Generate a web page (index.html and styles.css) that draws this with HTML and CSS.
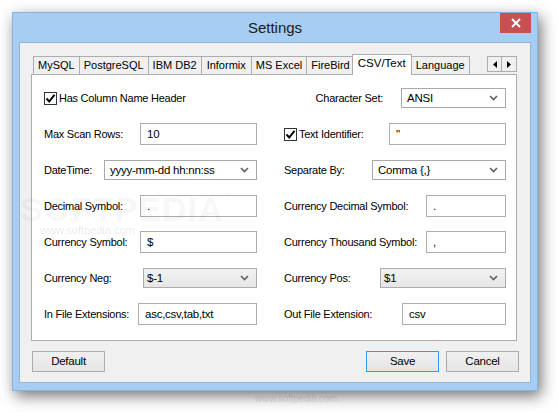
FILE: index.html
```html
<!DOCTYPE html>
<html lang="en">

<head>
    <meta charset="UTF-8">
    <title>Settings</title>
    <link rel="stylesheet" href="styles.css">
</head>

<body>
    <div class="window">
        <div class="titlebar">
            <span class="title">Settings</span>
            <span class="close">
                <svg width="10" height="10" viewBox="0 0 10 10"><path d="M1 1L9 9M9 1L1 9" stroke="#fff" stroke-width="2"/></svg>
            </span>
        </div>
        <div class="client">
            <div class="tabs">
                <div class="tab">MySQL</div>
                <div class="tab">PostgreSQL</div>
                <div class="tab">IBM DB2</div>
                <div class="tab tab-wide">Informix</div>
                <div class="tab">MS Excel</div>
                <div class="tab">FireBird</div>
                <div class="tab tab-active">CSV/Text</div>
                <div class="tab">Language</div>
                <div class="tabScroll">
                    <span class="scrollBtn"><svg width="4" height="7" viewBox="0 0 4 7"><path d="M4 0L0 3.5L4 7Z" fill="#000"/></svg></span>
                    <span class="scrollBtn"><svg width="4" height="7" viewBox="0 0 4 7"><path d="M0 0L4 3.5L0 7Z" fill="#000"/></svg></span>
                </div>
            </div>
            <div class="page">
                <div class="form">
                    <!-- row 1 -->
                    <div class="field">
                        <label class="check"><span class="box"><svg width="11" height="11" viewBox="0 0 11 11"><path d="M1.5 5.5L4.2 8.5L9.5 1.8" fill="none" stroke="#000" stroke-width="2"/></svg></span>Has Column Name Header</label>
                    </div>
                    <div class="field field-end">
                        <span class="label">Character Set:</span>
                        <div class="combo w105"><span>ANSI</span><svg class="chev" width="9" height="6" viewBox="0 0 9 6"><path d="M1 1L4.5 4.5L8 1" fill="none" stroke="#606060" stroke-width="1.6"/></svg></div>
                    </div>
                    <!-- row 2 -->
                    <div class="field">
                        <span class="label">Max Scan Rows:</span>
                        <div class="edit w117">10</div>
                    </div>
                    <div class="field">
                        <label class="check"><span class="box"><svg width="11" height="11" viewBox="0 0 11 11"><path d="M1.5 5.5L4.2 8.5L9.5 1.8" fill="none" stroke="#000" stroke-width="2"/></svg></span>Text Identifier:</label>
                        <div class="edit w117">"</div>
                    </div>
                    <!-- row 3 -->
                    <div class="field">
                        <span class="label">DateTime:</span>
                        <div class="combo w153"><span>yyyy-mm-dd hh:nn:ss</span><svg class="chev" width="9" height="6" viewBox="0 0 9 6"><path d="M1 1L4.5 4.5L8 1" fill="none" stroke="#606060" stroke-width="1.6"/></svg></div>
                    </div>
                    <div class="field">
                        <span class="label">Separate By:</span>
                        <div class="combo w134"><span>Comma {,}</span><svg class="chev" width="9" height="6" viewBox="0 0 9 6"><path d="M1 1L4.5 4.5L8 1" fill="none" stroke="#606060" stroke-width="1.6"/></svg></div>
                    </div>
                    <!-- row 4 -->
                    <div class="field">
                        <span class="label">Decimal Symbol:</span>
                        <div class="edit w117">.</div>
                    </div>
                    <div class="field">
                        <span class="label">Currency Decimal Symbol:</span>
                        <div class="edit w80">.</div>
                    </div>
                    <!-- row 5 -->
                    <div class="field">
                        <span class="label">Currency Symbol:</span>
                        <div class="edit w117">$</div>
                    </div>
                    <div class="field">
                        <span class="label">Currency Thousand Symbol:</span>
                        <div class="edit w80">,</div>
                    </div>
                    <!-- row 6 -->
                    <div class="field">
                        <span class="label">Currency Neg:</span>
                        <div class="combo combo-list w114"><span>$-1</span><svg class="chev" width="9" height="6" viewBox="0 0 9 6"><path d="M1 1L4.5 4.5L8 1" fill="none" stroke="#606060" stroke-width="1.6"/></svg></div>
                    </div>
                    <div class="field">
                        <span class="label">Currency Pos:</span>
                        <div class="combo combo-list w126"><span>$1</span><svg class="chev" width="9" height="6" viewBox="0 0 9 6"><path d="M1 1L4.5 4.5L8 1" fill="none" stroke="#606060" stroke-width="1.6"/></svg></div>
                    </div>
                    <!-- row 7 -->
                    <div class="field">
                        <span class="label">In File Extensions:</span>
                        <div class="edit w119">asc,csv,tab,txt</div>
                    </div>
                    <div class="field">
                        <span class="label">Out File Extension:</span>
                        <div class="edit w104">csv</div>
                    </div>
                </div>
            </div>
            <div class="buttons">
                <div class="btn">Default</div>
                <div class="btn btn-default">Save</div>
                <div class="btn">Cancel</div>
            </div>
        </div>
    </div>
    <div class="watermark">SOFTPEDIA<span class="tm">™</span></div>
    <div class="wmUrl">www.softpedia.com</div>
    <div class="footUrl">www.softpedia.com</div>
</body>

</html>
```

FILE: styles.css
```css
html,
body {
    margin: 0;
    padding: 0;
    background: #fff;
    font-family: "Liberation Sans", Arial, sans-serif;
    font-size: 11px;
    letter-spacing: -0.25px;
    color: #000;
}

body {
    width: 558px;
    height: 412px;
    overflow: hidden;
    position: relative;
}

.window {
    margin: 12px 0 0 12px;
    width: 526px;
    height: 379px;
    box-sizing: border-box;
    background: #a7cdf3;
    border: 1px solid #86b2de;
    padding: 0 6px 7px 6px;
    box-shadow: 3px 5px 14px rgba(0, 0, 0, 0.55);
    position: relative;
}

.titlebar {
    height: 29px;
    line-height: 29px;
    text-align: center;
}

.title {
    font-size: 15px;
    letter-spacing: 0;
    color: #1a1a1a;
}

.close {
    position: absolute;
    top: 0;
    right: 6px;
    width: 31px;
    height: 20px;
    background: #c75050;
    display: flex;
    align-items: center;
    justify-content: center;
}

.client {
    height: 341px;
    box-sizing: border-box;
    background: #f0f0f0;
    border: 1px solid #92b4d6;
    padding: 11px 13px 0 11px;
}

/* tabs */
.tabs {
    height: 20px;
    display: flex;
    align-items: flex-end;
    padding-left: 2px;
    position: relative;
    z-index: 1;
}

.tab {
    height: 18px;
    line-height: 17px;
    box-sizing: border-box;
    padding: 0 4px;
    border: 1px solid #adadad;
    border-bottom: none;
    margin-right: -1px;
    background: #f0f0f0;
    white-space: nowrap;
    letter-spacing: 0;
}

.tab-wide {
    padding: 0 5px;
}

.tab-active {
    height: 21px;
    line-height: 17px;
    margin: 0 -1px -1px -2px;
    padding: 0 5px;
    background: #fff;
    position: relative;
    font-size: 11.5px;
}

.tabScroll {
    margin-left: auto;
    align-self: flex-start;
    margin-top: 2px;
    display: flex;
}

.scrollBtn {
    width: 15px;
    height: 16px;
    box-sizing: border-box;
    border: 1px solid #adadad;
    background: #f0f0f0;
    display: flex;
    align-items: center;
    justify-content: center;
}

.scrollBtn + .scrollBtn {
    margin-left: -1px;
    width: 16px;
}

/* page */
.page {
    height: 267px;
    box-sizing: border-box;
    background: #fff;
    border: 1px solid #adadad;
    padding: 5px 10px 0 12px;
}

.form {
    display: grid;
    grid-template-columns: 213px 222px;
    grid-auto-rows: 36px;
    column-gap: 27px;
}

.field {
    display: flex;
    align-items: center;
    justify-content: space-between;
}

.field-end {
    justify-content: flex-end;
    gap: 18px;
}

.check {
    display: flex;
    align-items: center;
}

.box {
    width: 13px;
    height: 13px;
    box-sizing: border-box;
    border: 1px solid #333;
    background: #fff;
    margin-right: 2px;
    display: flex;
    align-items: center;
    justify-content: center;
}

.edit,
.combo {
    box-sizing: border-box;
    border: 1px solid #abadb3;
    background: #fff;
    font-size: 11.5px;
    white-space: nowrap;
}

.edit {
    height: 22px;
    line-height: 20px;
    padding-left: 6px;
}

.combo {
    height: 20px;
    display: flex;
    align-items: center;
    justify-content: space-between;
    padding: 0 7px 0 5px;
    border-color: #a9a9a9;
}

.combo-list {
    background: linear-gradient(#f2f2f2, #e6e6e6);
    border-color: #acacac;
    padding-left: 3px;
}

.w80 { width: 80px; }
.w104 { width: 104px; }
.w105 { width: 105px; }
.w114 { width: 114px; }
.w117 { width: 117px; }
.w119 { width: 119px; }
.w126 { width: 126px; }
.w134 { width: 134px; }
.w153 { width: 153px; }

/* buttons */
.buttons {
    display: flex;
    margin: 10px -2px 0 1px;
}

.btn {
    width: 73px;
    height: 21px;
    line-height: 19px;
    box-sizing: border-box;
    text-align: center;
    border: 1px solid #acacac;
    background: linear-gradient(#f0f0f0, #e5e5e5);
    font-size: 11.5px;
}

.btn-default {
    margin-left: auto;
    margin-right: 7px;
    border-color: #3399ff;
}

/* watermark */
.watermark {
    position: absolute;
    left: 20px;
    top: 190px;
    font-size: 34px;
    font-weight: bold;
    letter-spacing: 1px;
    color: rgba(0, 0, 0, 0.05);
    pointer-events: none;
}

.tm {
    font-size: 8px;
    vertical-align: top;
}

.wmUrl {
    position: absolute;
    left: 40px;
    top: 224px;
    font-size: 11px;
    letter-spacing: 0;
    color: rgba(0, 0, 0, 0.1);
}

.footUrl {
    position: absolute;
    left: 255px;
    top: 393px;
    font-size: 10px;
    color: rgba(0, 0, 0, 0.12);
}
```
